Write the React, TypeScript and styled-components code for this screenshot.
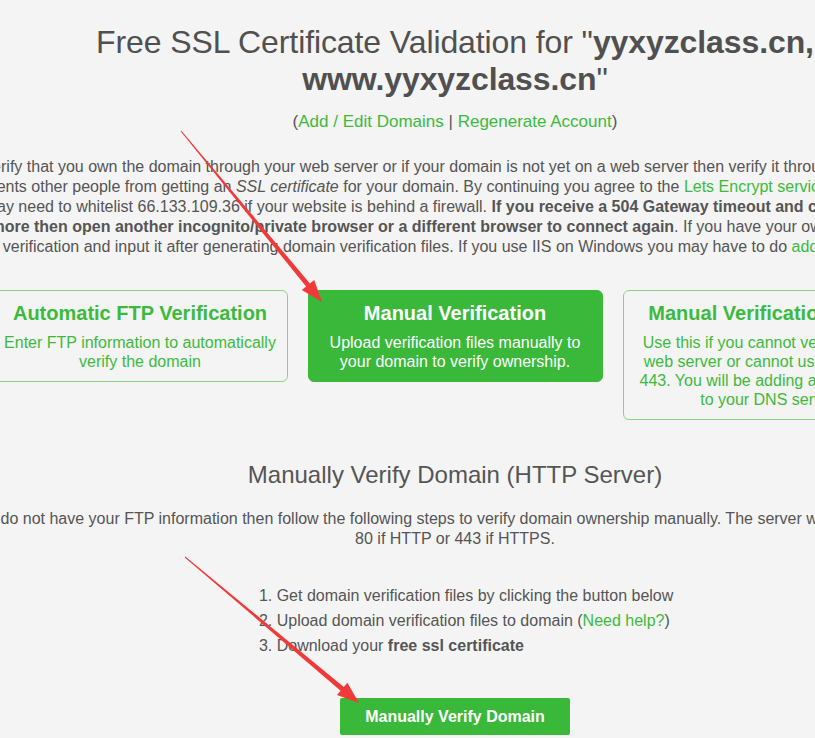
import React from "react";
import styled, { createGlobalStyle } from "styled-components";

const GREEN = "#39b839";
const LINK_GREEN = "#3dba3d";
const TEXT = "#555555";

const GlobalStyle = createGlobalStyle`
    html, body {
        margin: 0;
        padding: 0;
        background: #f4f4f4;
    }
    body {
        font-family: "Liberation Sans", Arial, sans-serif;
        color: ${TEXT};
    }
`;

const Viewport = styled.div`
    position: relative;
    width: 100%;
    height: 738px;
    overflow: hidden;
`;

// the page column is wider than the window, centred a little right of it
const Column = styled.div`
    width: 1300px;
    margin-left: -195px;
    padding-top: 24px;
    text-align: center;
`;

const Title = styled.h1`
    max-width: 900px;
    margin: 0 auto;
    font-size: 32px;
    line-height: 37px;
    font-weight: normal;
    letter-spacing: -0.1px;
    color: #505050;

    b {
        font-weight: bold;
    }
`;

const Link = styled.a`
    color: ${LINK_GREEN};
    text-decoration: none;
`;

const AccountLinks = styled.p`
    margin: 14px 0 0;
    font-size: 17px;
    line-height: 20px;
`;

const Intro = styled.p`
    margin: 25px 0 0;
    font-size: 16px;
    line-height: 20px;
    white-space: nowrap;
`;

const Options = styled.div`
    display: flex;
    justify-content: center;
    align-items: flex-start;
    gap: 20px;
    margin-top: 33px;
`;

const OptionCard = styled.div<{ $active?: boolean }>`
    box-sizing: border-box;
    width: 295px;
    padding: 10px;
    border-radius: 6px;
    border: 1px solid ${(p) => (p.$active ? GREEN : "#86d586")};
    background: ${(p) => (p.$active ? GREEN : "transparent")};
    color: ${(p) => (p.$active ? "#ffffff" : LINK_GREEN)};
    cursor: pointer;
`;

const CardTitle = styled.div`
    font-size: 20px;
    line-height: 24px;
    font-weight: bold;
`;

const CardText = styled.div`
    margin-top: 8px;
    font-size: 16px;
    line-height: 19px;
`;

const SectionTitle = styled.h2`
    margin: 41px 0 0;
    font-size: 24px;
    line-height: 28px;
    font-weight: normal;
`;

const Note = styled.p`
    margin: 20px 0 0;
    font-size: 16px;
    line-height: 20px;
    white-space: nowrap;
`;

const StepsWrap = styled.div`
    margin-top: 33.5px;
`;

const Steps = styled.ol`
    display: inline-block;
    margin: 0;
    padding-left: 40px;
    text-align: left;
    font-size: 16px;
    line-height: 25px;
`;

const ButtonRow = styled.div`
    margin-top: 40.5px;
`;

const VerifyButton = styled.button`
    font-family: "Liberation Sans", Arial, sans-serif;
    font-size: 16px;
    font-weight: bold;
    line-height: 20px;
    padding: 8.5px 25.5px;
    border: 0;
    border-radius: 2px;
    background: ${GREEN};
    color: #ffffff;
    cursor: pointer;
`;

const Annotations = styled.svg`
    position: absolute;
    top: 0;
    left: 0;
    pointer-events: none;
`;

const arrows = [
    "180.6,131.3 306.1,286.6 301.8,290.1 322,302 314.2,279.9 309.9,283.4 181.4,130.7",
    "184.7,557.4 340.6,690.7 337,694.9 359,703 347.4,682.7 343.8,686.9 185.3,556.6",
];

export default function App() {
    return (
        <>
            <GlobalStyle />
            <Viewport>
                <Column>
                    <Title>
                        Free SSL Certificate Validation for "<b>yyxyzclass.cn, www.yyxyzclass.cn</b>"
                    </Title>
                    <AccountLinks>
                        (<Link href="#">Add / Edit Domains</Link> | <Link href="#">Regenerate Account</Link>)
                    </AccountLinks>
                    <Intro>
                        We need to verify that you own the domain through your web server or if your domain is not yet on a web server then verify it through your DNS provider. This
                        <br />
                        prevents other people from getting an <i>SSL certificate</i> for your domain. By continuing you agree to the{" "}
                        <Link href="#">Lets Encrypt service agreement</Link>. You
                        <br />
                        may need to whitelist 66.133.109.36 if your website is behind a firewall.{" "}
                        <b>If you receive a 504 Gateway timeout and cannot connect</b>
                        <br />
                        <b>anymore then open another incognito/private browser or a different browser to connect again</b>. If you have your own CSR, save it for
                        <br />
                        verification and input it after generating domain verification files. If you use IIS on Windows you may have to do{" "}
                        <Link href="#">additional steps</Link>.
                    </Intro>

                    <Options>
                        <OptionCard>
                            <CardTitle>Automatic FTP Verification</CardTitle>
                            <CardText>Enter FTP information to automatically verify the domain</CardText>
                        </OptionCard>
                        <OptionCard $active>
                            <CardTitle>Manual Verification</CardTitle>
                            <CardText>Upload verification files manually to your domain to verify ownership.</CardText>
                        </OptionCard>
                        <OptionCard>
                            <CardTitle>Manual Verification (DNS)</CardTitle>
                            <CardText>
                                Use this if you cannot verify through web server or cannot use port 80 or 443. You will be adding a TXT record to your DNS server.
                            </CardText>
                        </OptionCard>
                    </Options>

                    <SectionTitle>Manually Verify Domain (HTTP Server)</SectionTitle>
                    <Note>
                        If you do not have your FTP information then follow the following steps to verify domain ownership manually. The server will be tested on port
                        <br />
                        80 if HTTP or 443 if HTTPS.
                    </Note>

                    <StepsWrap>
                        <Steps>
                            <li>Get domain verification files by clicking the button below</li>
                            <li>
                                Upload domain verification files to domain (<Link href="#">Need help?</Link>)
                            </li>
                            <li>
                                Download your <b>free ssl certificate</b>
                            </li>
                        </Steps>
                    </StepsWrap>

                    <ButtonRow>
                        <VerifyButton>Manually Verify Domain</VerifyButton>
                    </ButtonRow>
                </Column>

                <Annotations width="815" height="738" viewBox="0 0 815 738">
                    {arrows.map((points) => (
                        <polygon key={points} points={points} fill="#f03a3a" />
                    ))}
                </Annotations>
            </Viewport>
        </>
    );
}
